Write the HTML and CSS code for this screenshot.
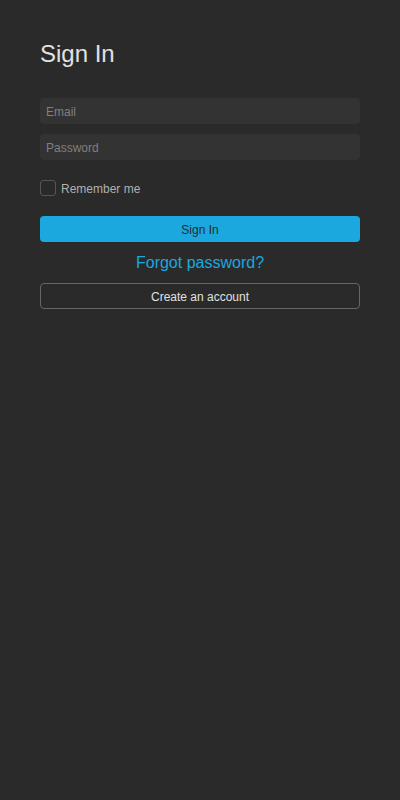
FILE: index.html
```html
<!DOCTYPE html>
<html>
<head>
<meta charset="utf-8">
<link rel="stylesheet" href="styles.css">
</head>
<body>
<main class="page">
  <h1 class="title">Sign In</h1>
  <form class="form">
    <input class="field" type="email" placeholder="Email">
    <input class="field field-gap" type="password" placeholder="Password">
    <label class="remember"><span class="box"></span><span class="remember-text">Remember me</span></label>
    <button type="button" class="btn-primary">Sign In</button>
    <a class="forgot" href="#">Forgot password?</a>
    <button type="button" class="btn-outline">Create an account</button>
  </form>
</main>
</body>
</html>
```
FILE: styles.css
```css
html, body {
  margin: 0;
  padding: 0;
  background: #2a2a2a;
  font-family: "Liberation Sans", Arial, sans-serif;
}
.page {
  padding: 40px;
  box-sizing: border-box;
  min-height: 800px;
}
.title {
  margin: 0;
  font-size: 24px;
  font-weight: normal;
  line-height: 28px;
  color: #e2e2e2;
}
.form {
  display: flex;
  flex-direction: column;
  margin-top: 30px;
}
.field {
  height: 26px;
  box-sizing: border-box;
  border: none;
  border-radius: 4px;
  background: #333333;
  color: #ddd;
  padding: 2px 6px 0;
  font-family: inherit;
  font-size: 12px;
  outline: none;
}
.field::placeholder {
  color: #808080;
}
.field-gap {
  margin-top: 10px;
}
.remember {
  display: flex;
  align-items: center;
  margin-top: 20px;
  height: 16px;
}
.box {
  width: 16px;
  height: 16px;
  box-sizing: border-box;
  border: 1px solid #555;
  border-radius: 3px;
}
.remember-text {
  margin-left: 5px;
  padding-top: 2px;
  font-size: 12px;
  color: #b0b0b0;
}
.btn-primary {
  margin-top: 20px;
  height: 26px;
  border: none;
  border-radius: 4px;
  background: #1ba8de;
  color: #2a2a2a;
  font-family: inherit;
  font-size: 12px;
  padding: 2px 0 0;
}
.forgot {
  margin-top: 10px;
  text-align: center;
  font-size: 16px;
  line-height: 22px;
  color: #1ba8de;
  text-decoration: none;
}
.btn-outline {
  margin-top: 9px;
  height: 26px;
  border: 1px solid #666;
  border-radius: 4px;
  background: transparent;
  color: #e0e0e0;
  font-family: inherit;
  font-size: 12px;
  padding: 2px 0 0;
}
```
